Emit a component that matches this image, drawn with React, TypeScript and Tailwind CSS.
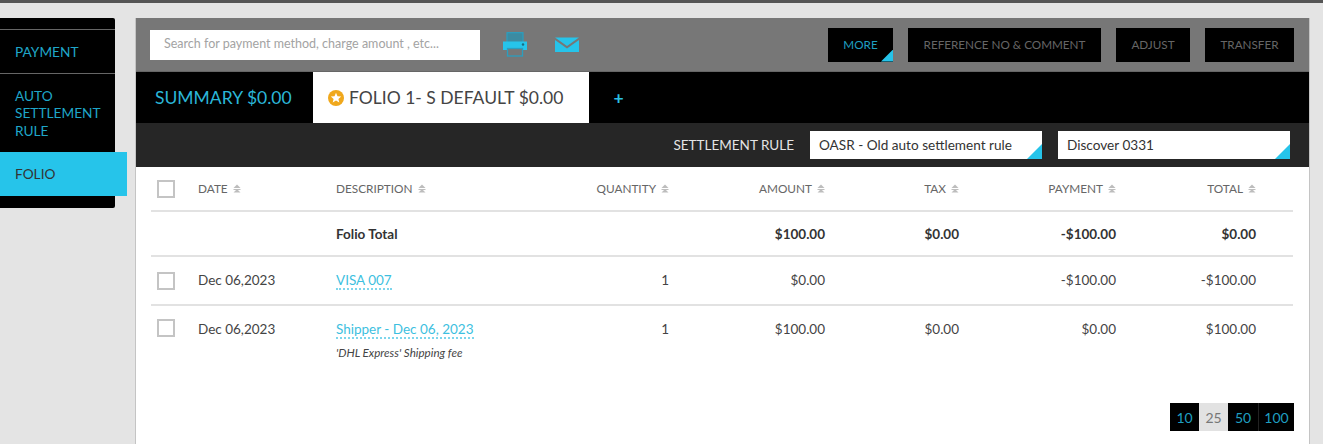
const gridCols = "grid grid-cols-[47px_138px_200px_133px_156px_134px_157px_140px_37px] items-center";

function SortIcon() {
  return (
    <svg width="8" height="9" viewBox="0 0 8 9" className="ml-[5px] inline-block shrink-0">
      <path d="M4 0.5 L7.5 4 H0.5 Z" fill="#bdbdbd" />
      <path d="M0.5 5 H7.5 L7.5 6 H0.5 Z M4 5 L7.5 8.5 H0.5 Z" fill="#bdbdbd" />
    </svg>
  );
}

function PrinterIcon() {
  return (
    <svg width="24" height="25" viewBox="0 0 24 25">
      <rect x="4" y="0.7" width="16" height="10" fill="#3c8ba1" stroke="#2a9fc0" strokeWidth="1.2" />
      <path d="M0 9.5 H24 V18 H0 Z" fill="#26c4ea" />
      <circle cx="20" cy="12.5" r="1.2" fill="#1b6a80" />
      <rect x="4.5" y="16.5" width="15" height="7.5" fill="#777777" stroke="#2a9fc0" strokeWidth="1.3" />
    </svg>
  );
}

function MailIcon() {
  return (
    <svg width="24" height="16" viewBox="0 0 24 16">
      <path d="M0 0.5 H24 L12 9 Z" fill="#26c4ea" />
      <path d="M0 3 L12 11.5 L24 3 V15 H0 Z" fill="#26c4ea" />
    </svg>
  );
}

function StarBadge() {
  return (
    <svg width="16" height="16" viewBox="0 0 16 16" className="shrink-0">
      <circle cx="8" cy="8" r="8" fill="#f0a81c" />
      <path d="M8 2.8 L9.5 6.2 L13.2 6.5 L10.4 8.9 L11.3 12.5 L8 10.6 L4.7 12.5 L5.6 8.9 L2.8 6.5 L6.5 6.2 Z" fill="#ffffff" />
    </svg>
  );
}

function Corner({ size }: { size: string }) {
  return <span className={`absolute right-0 bottom-0 ${size} bg-[#26c4ea] [clip-path:polygon(100%_0,100%_100%,0_100%)]`} />;
}

function Checkbox() {
  return <span className="block h-[18px] w-[18px] border-2 border-[#c4c4c4] bg-white ml-[6px]" />;
}

function HeaderCell({ label, right }: { label: string; right?: boolean }) {
  return (
    <div className={`flex items-center text-[11.8px] text-[#666] ${right ? "justify-end" : ""}`}>
      {label}
      <SortIcon />
    </div>
  );
}

function Toolbar() {
  return (
    <div className="flex h-[54px] items-center justify-between border-b border-[#666] bg-[#777777] pl-[14px] pr-[15px]">
      <div className="flex items-center">
        <div className="flex h-[30px] w-[330px] items-center bg-white pl-[14px] text-[12.5px] text-[#a3a3a3]">
          Search for payment method, charge amount , etc...
        </div>
        <span className="ml-[23px] flex"><PrinterIcon /></span>
        <span className="ml-[28px] mt-[1px] flex"><MailIcon /></span>
      </div>
      <div className="flex gap-[15px] text-[11.7px]">
        <div className="relative flex h-[34px] w-[65px] items-center justify-center bg-black text-[#1f9fc0]">
          MORE
          <Corner size="h-[12px] w-[12px]" />
        </div>
        <div className="flex h-[34px] w-[193px] items-center justify-center bg-black text-[#666]">REFERENCE NO &amp; COMMENT</div>
        <div className="flex h-[34px] w-[74px] items-center justify-center bg-black text-[#666]">ADJUST</div>
        <div className="flex h-[34px] w-[89px] items-center justify-center bg-black text-[#666]">TRANSFER</div>
      </div>
    </div>
  );
}

function Tabs() {
  return (
    <div className="flex h-[51px] bg-black pt-[1px] text-[17.5px]">
      <div className="flex w-[177px] items-center pl-[19px] text-[#2bb6d8]">SUMMARY $0.00</div>
      <div className="-mt-[1px] flex w-[276px] items-center gap-[5px] bg-white pl-[15px] pt-[1px] text-[#444]">
        <StarBadge />
        FOLIO 1- S DEFAULT $0.00
      </div>
      <div className="flex w-[59px] items-center justify-center font-bold text-[#2bc0e4]">+</div>
    </div>
  );
}

function RuleBar() {
  return (
    <div className="flex h-[44px] items-center justify-end gap-[16px] bg-[#262626] pr-[19px] text-[13.6px]">
      <span className="text-[13.5px] text-[#e4e4e4]">SETTLEMENT RULE</span>
      <div className="relative flex h-[28px] w-[232px] items-center bg-white pl-[9px] pt-[1px] text-[#333]">
        OASR - Old auto settlement rule
        <Corner size="h-[15px] w-[15px]" />
      </div>
      <div className="relative flex h-[28px] w-[232px] items-center bg-white pl-[9px] pt-[1px] text-[#333]">
        Discover 0331
        <Corner size="h-[15px] w-[15px]" />
      </div>
    </div>
  );
}

function Table() {
  return (
    <div className="ml-[15px] w-[1142px] text-[13.5px] text-[#444]">
      <div className={`${gridCols} h-[45px] border-b-2 border-[#e2e2e2]`}>
        <Checkbox />
        <HeaderCell label="DATE" />
        <HeaderCell label="DESCRIPTION" />
        <HeaderCell label="QUANTITY" right />
        <HeaderCell label="AMOUNT" right />
        <HeaderCell label="TAX" right />
        <HeaderCell label="PAYMENT" right />
        <HeaderCell label="TOTAL" right />
      </div>
      <div className={`${gridCols} h-[45px] border-b-2 border-[#e2e2e2] pt-[1px] font-bold text-[#333]`}>
        <div className="col-start-3">Folio Total</div>
        <div className="col-start-5 text-right">$100.00</div>
        <div className="text-right">$0.00</div>
        <div className="text-right">-$100.00</div>
        <div className="text-right">$0.00</div>
      </div>
      <div className={`${gridCols} h-[49px] border-b-2 border-[#e2e2e2]`}>
        <Checkbox />
        <div>Dec 06,2023</div>
        <div><span className="border-b-2 border-dotted border-[#7dd6ec] text-[#3dbfe0]">VISA 007</span></div>
        <div className="text-right">1</div>
        <div className="text-right">$0.00</div>
        <div />
        <div className="text-right">-$100.00</div>
        <div className="text-right">-$100.00</div>
      </div>
      <div className={`${gridCols} h-[47px] !items-start pt-[13px]`}>
        <Checkbox />
        <div>Dec 06,2023</div>
        <div className="whitespace-nowrap">
          <span className="border-b-2 border-dotted border-[#7dd6ec] text-[#3dbfe0]">Shipper - Dec 06, 2023</span>
          <div className="mt-[5px] text-[11.6px] italic text-[#444]">'DHL Express' Shipping fee</div>
        </div>
        <div className="text-right">1</div>
        <div className="text-right">$100.00</div>
        <div className="text-right">$0.00</div>
        <div className="text-right">$0.00</div>
        <div className="text-right">$100.00</div>
      </div>
    </div>
  );
}

function Pager() {
  return (
    <div className="mt-[50px] mr-[15px] flex h-[28px] justify-end text-[14px]">
      <div className="flex w-[29px] items-center justify-center bg-black text-[#1f9fc0]">10</div>
      <div className="flex w-[29px] items-center justify-center bg-[#e2e2e2] text-[#777]">25</div>
      <div className="flex w-[30px] items-center justify-center bg-black text-[#1f9fc0]">50</div>
      <div className="flex w-[36px] items-center justify-center border-l border-[#222] bg-black text-[#1f9fc0]">100</div>
    </div>
  );
}

function Sidebar() {
  return (
    <div className="mt-[15px] flex h-[190px] w-[115px] flex-col rounded-r-[2px] bg-black text-[13.7px] leading-[17.5px] text-[#1fa6c8]">
      <div className="h-[12px] border-b border-[#666]" />
      <div className="flex h-[44px] items-center border-b border-[#666] pl-[15px]">PAYMENT</div>
      <div className="flex h-[78px] items-center pl-[15px]">
        <span>AUTO<br />SETTLEMENT<br />RULE</span>
      </div>
      <div className="flex h-[44px] w-[127px] shrink-0 items-center bg-[#26c4ea] pl-[15px] text-[#333]">FOLIO</div>
    </div>
  );
}

export default function App() {
  return (
    <div className="h-[444px] w-[1323px] overflow-hidden bg-[#e4e4e4] font-['Lato',sans-serif]">
      <div className="h-[3px] bg-[#555]" />
      <div className="flex">
        <Sidebar />
        <div className="mt-[15px] ml-[20px] h-[426px] w-[1175px] border-x border-[#c4c4c4] bg-white">
          <Toolbar />
          <Tabs />
          <RuleBar />
          <Table />
          <Pager />
        </div>
      </div>
    </div>
  );
}
